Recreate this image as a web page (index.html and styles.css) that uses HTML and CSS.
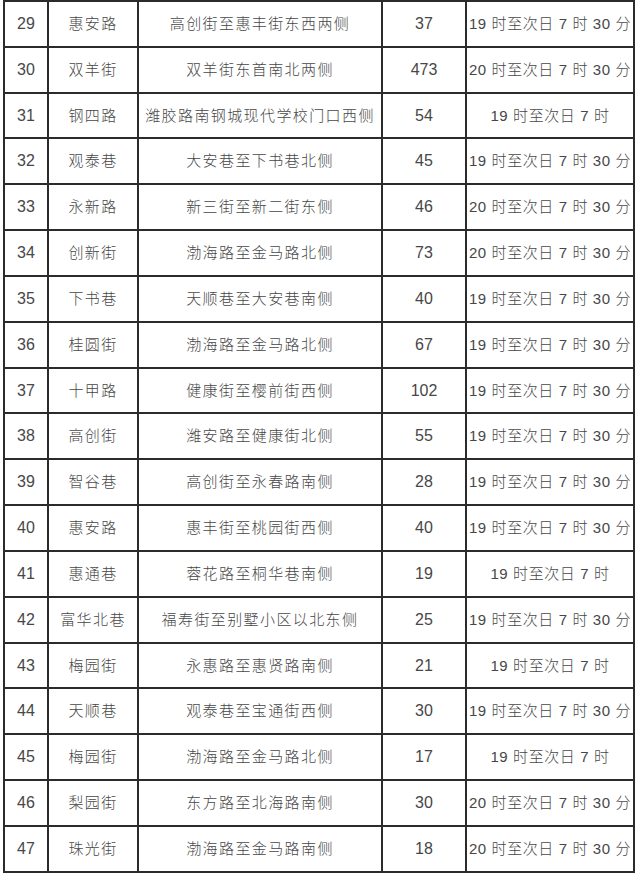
FILE: index.html
```html
<!DOCTYPE html>
<html lang="zh">
<head>
<meta charset="utf-8">
<link rel="stylesheet" href="styles.css">
</head>
<body>
<table class="sched">
<colgroup><col class="c-no"><col class="c-name"><col class="c-desc"><col class="c-num"><col class="c-time"></colgroup>
<tbody>
<tr><td class="no">29</td><td class="name">惠安路</td><td class="desc">高创街至惠丰街东西两侧</td><td class="num">37</td><td class="time">19 时至次日 7 时 30 分</td></tr>
<tr><td class="no">30</td><td class="name">双羊街</td><td class="desc">双羊街东首南北两侧</td><td class="num">473</td><td class="time">20 时至次日 7 时 30 分</td></tr>
<tr><td class="no">31</td><td class="name">钢四路</td><td class="desc">潍胶路南钢城现代学校门口西侧</td><td class="num">54</td><td class="time">19 时至次日 7 时</td></tr>
<tr><td class="no">32</td><td class="name">观泰巷</td><td class="desc">大安巷至下书巷北侧</td><td class="num">45</td><td class="time">19 时至次日 7 时 30 分</td></tr>
<tr><td class="no">33</td><td class="name">永新路</td><td class="desc">新三街至新二街东侧</td><td class="num">46</td><td class="time">20 时至次日 7 时 30 分</td></tr>
<tr><td class="no">34</td><td class="name">创新街</td><td class="desc">渤海路至金马路北侧</td><td class="num">73</td><td class="time">20 时至次日 7 时 30 分</td></tr>
<tr><td class="no">35</td><td class="name">下书巷</td><td class="desc">天顺巷至大安巷南侧</td><td class="num">40</td><td class="time">19 时至次日 7 时 30 分</td></tr>
<tr><td class="no">36</td><td class="name">桂圆街</td><td class="desc">渤海路至金马路北侧</td><td class="num">67</td><td class="time">19 时至次日 7 时 30 分</td></tr>
<tr><td class="no">37</td><td class="name">十甲路</td><td class="desc">健康街至樱前街西侧</td><td class="num">102</td><td class="time">19 时至次日 7 时 30 分</td></tr>
<tr><td class="no">38</td><td class="name">高创街</td><td class="desc">潍安路至健康街北侧</td><td class="num">55</td><td class="time">19 时至次日 7 时 30 分</td></tr>
<tr><td class="no">39</td><td class="name">智谷巷</td><td class="desc">高创街至永春路南侧</td><td class="num">28</td><td class="time">19 时至次日 7 时 30 分</td></tr>
<tr><td class="no">40</td><td class="name">惠安路</td><td class="desc">惠丰街至桃园街西侧</td><td class="num">40</td><td class="time">19 时至次日 7 时 30 分</td></tr>
<tr><td class="no">41</td><td class="name">惠通巷</td><td class="desc">蓉花路至桐华巷南侧</td><td class="num">19</td><td class="time">19 时至次日 7 时</td></tr>
<tr><td class="no">42</td><td class="name">富华北巷</td><td class="desc">福寿街至别墅小区以北东侧</td><td class="num">25</td><td class="time">19 时至次日 7 时 30 分</td></tr>
<tr><td class="no">43</td><td class="name">梅园街</td><td class="desc">永惠路至惠贤路南侧</td><td class="num">21</td><td class="time">19 时至次日 7 时</td></tr>
<tr><td class="no">44</td><td class="name">天顺巷</td><td class="desc">观泰巷至宝通街西侧</td><td class="num">30</td><td class="time">19 时至次日 7 时 30 分</td></tr>
<tr><td class="no">45</td><td class="name">梅园街</td><td class="desc">渤海路至金马路北侧</td><td class="num">17</td><td class="time">19 时至次日 7 时</td></tr>
<tr><td class="no">46</td><td class="name">梨园街</td><td class="desc">东方路至北海路南侧</td><td class="num">30</td><td class="time">20 时至次日 7 时 30 分</td></tr>
<tr><td class="no">47</td><td class="name">珠光街</td><td class="desc">渤海路至金马路南侧</td><td class="num">18</td><td class="time">20 时至次日 7 时 30 分</td></tr>
</tbody>
</table>
</body>
</html>
```
FILE: styles.css
```css
html, body {
  margin: 0;
  padding: 0;
  background: #ffffff;
}

body {
  font-family: "Liberation Sans", "Noto Sans CJK SC", sans-serif;
  color: #474747;
}

.sched {
  border-collapse: collapse;
  table-layout: fixed;
  width: 630px;
  margin: 0 0 0 3px;
}

.c-no { width: 44px; }
.c-name { width: 90px; }
.c-desc { width: 244px; }
.c-num { width: 84px; }
.c-time { width: 168px; }

.sched tr {
  height: 45.84px;
}

.sched td {
  border: 2px solid #2b2b2b;
  padding: 0;
  text-align: center;
  vertical-align: middle;
  white-space: nowrap;
  font-size: 15px;
  font-weight: 300;
  line-height: 20px;
}

.sched td.no,
.sched td.num {
  font-size: 16px;
  font-weight: 400;
}

.name, .desc {
  letter-spacing: 1.4px;
}

.time {
  letter-spacing: 0.6px;
}
```
